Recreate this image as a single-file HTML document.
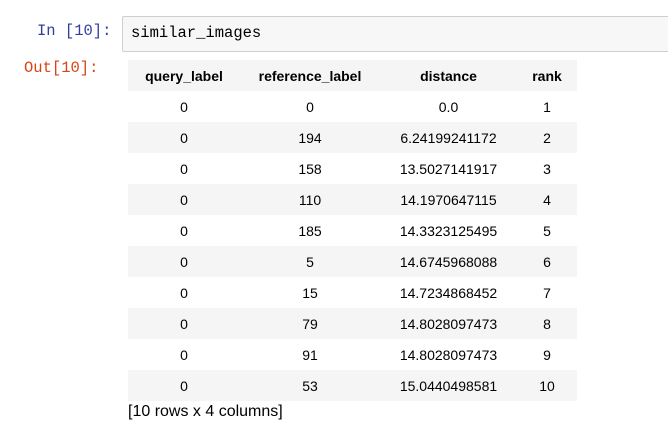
<!DOCTYPE html>
<html><head><style>
body{margin:0;width:668px;height:443px;background:#fff;position:relative;overflow:hidden;font-family:"Liberation Sans",sans-serif;}
.p{position:absolute;font-family:"Liberation Mono",monospace;font-size:15.5px;}
.in{left:37px;top:22px;color:#303f9f;}
.out{left:24px;top:59px;color:#d84315;}
.box{position:absolute;left:122px;top:16px;width:560px;height:36px;border:1px solid #cfcfcf;border-radius:2px;background:#f7f7f7;box-sizing:border-box;}
.box span{position:absolute;left:8px;top:7px;font-family:"Liberation Mono",monospace;font-size:15.5px;color:#000;}
table{position:absolute;left:128px;top:60px;border-collapse:collapse;font-size:14px;color:#000;}
td,th{height:31px;padding:0;text-align:center;}
th{font-weight:bold;}
.c1{width:112px}.c2{width:140px}.c3{width:137px}.c4{width:60px}
.foot{position:absolute;left:128px;top:403px;font-size:16px;}
</style></head><body>
<div class="p in">In [10]:</div>
<div class="box"><span>similar_images</span></div>
<div class="p out">Out[10]:</div>
<table>
<tr style="background:#f5f5f5"><th class="c1">query_label</th><th class="c2">reference_label</th><th class="c3">distance</th><th class="c4">rank</th></tr>
<tr style="background:#fff"><td>0</td><td>0</td><td>0.0</td><td>1</td></tr>
<tr style="background:#f5f5f5"><td>0</td><td>194</td><td>6.24199241172</td><td>2</td></tr>
<tr style="background:#fff"><td>0</td><td>158</td><td>13.5027141917</td><td>3</td></tr>
<tr style="background:#f5f5f5"><td>0</td><td>110</td><td>14.1970647115</td><td>4</td></tr>
<tr style="background:#fff"><td>0</td><td>185</td><td>14.3323125495</td><td>5</td></tr>
<tr style="background:#f5f5f5"><td>0</td><td>5</td><td>14.6745968088</td><td>6</td></tr>
<tr style="background:#fff"><td>0</td><td>15</td><td>14.7234868452</td><td>7</td></tr>
<tr style="background:#f5f5f5"><td>0</td><td>79</td><td>14.8028097473</td><td>8</td></tr>
<tr style="background:#fff"><td>0</td><td>91</td><td>14.8028097473</td><td>9</td></tr>
<tr style="background:#f5f5f5"><td>0</td><td>53</td><td>15.0440498581</td><td>10</td></tr>
</table>
<div class="foot">[10 rows x 4 columns]</div>
</body></html>
